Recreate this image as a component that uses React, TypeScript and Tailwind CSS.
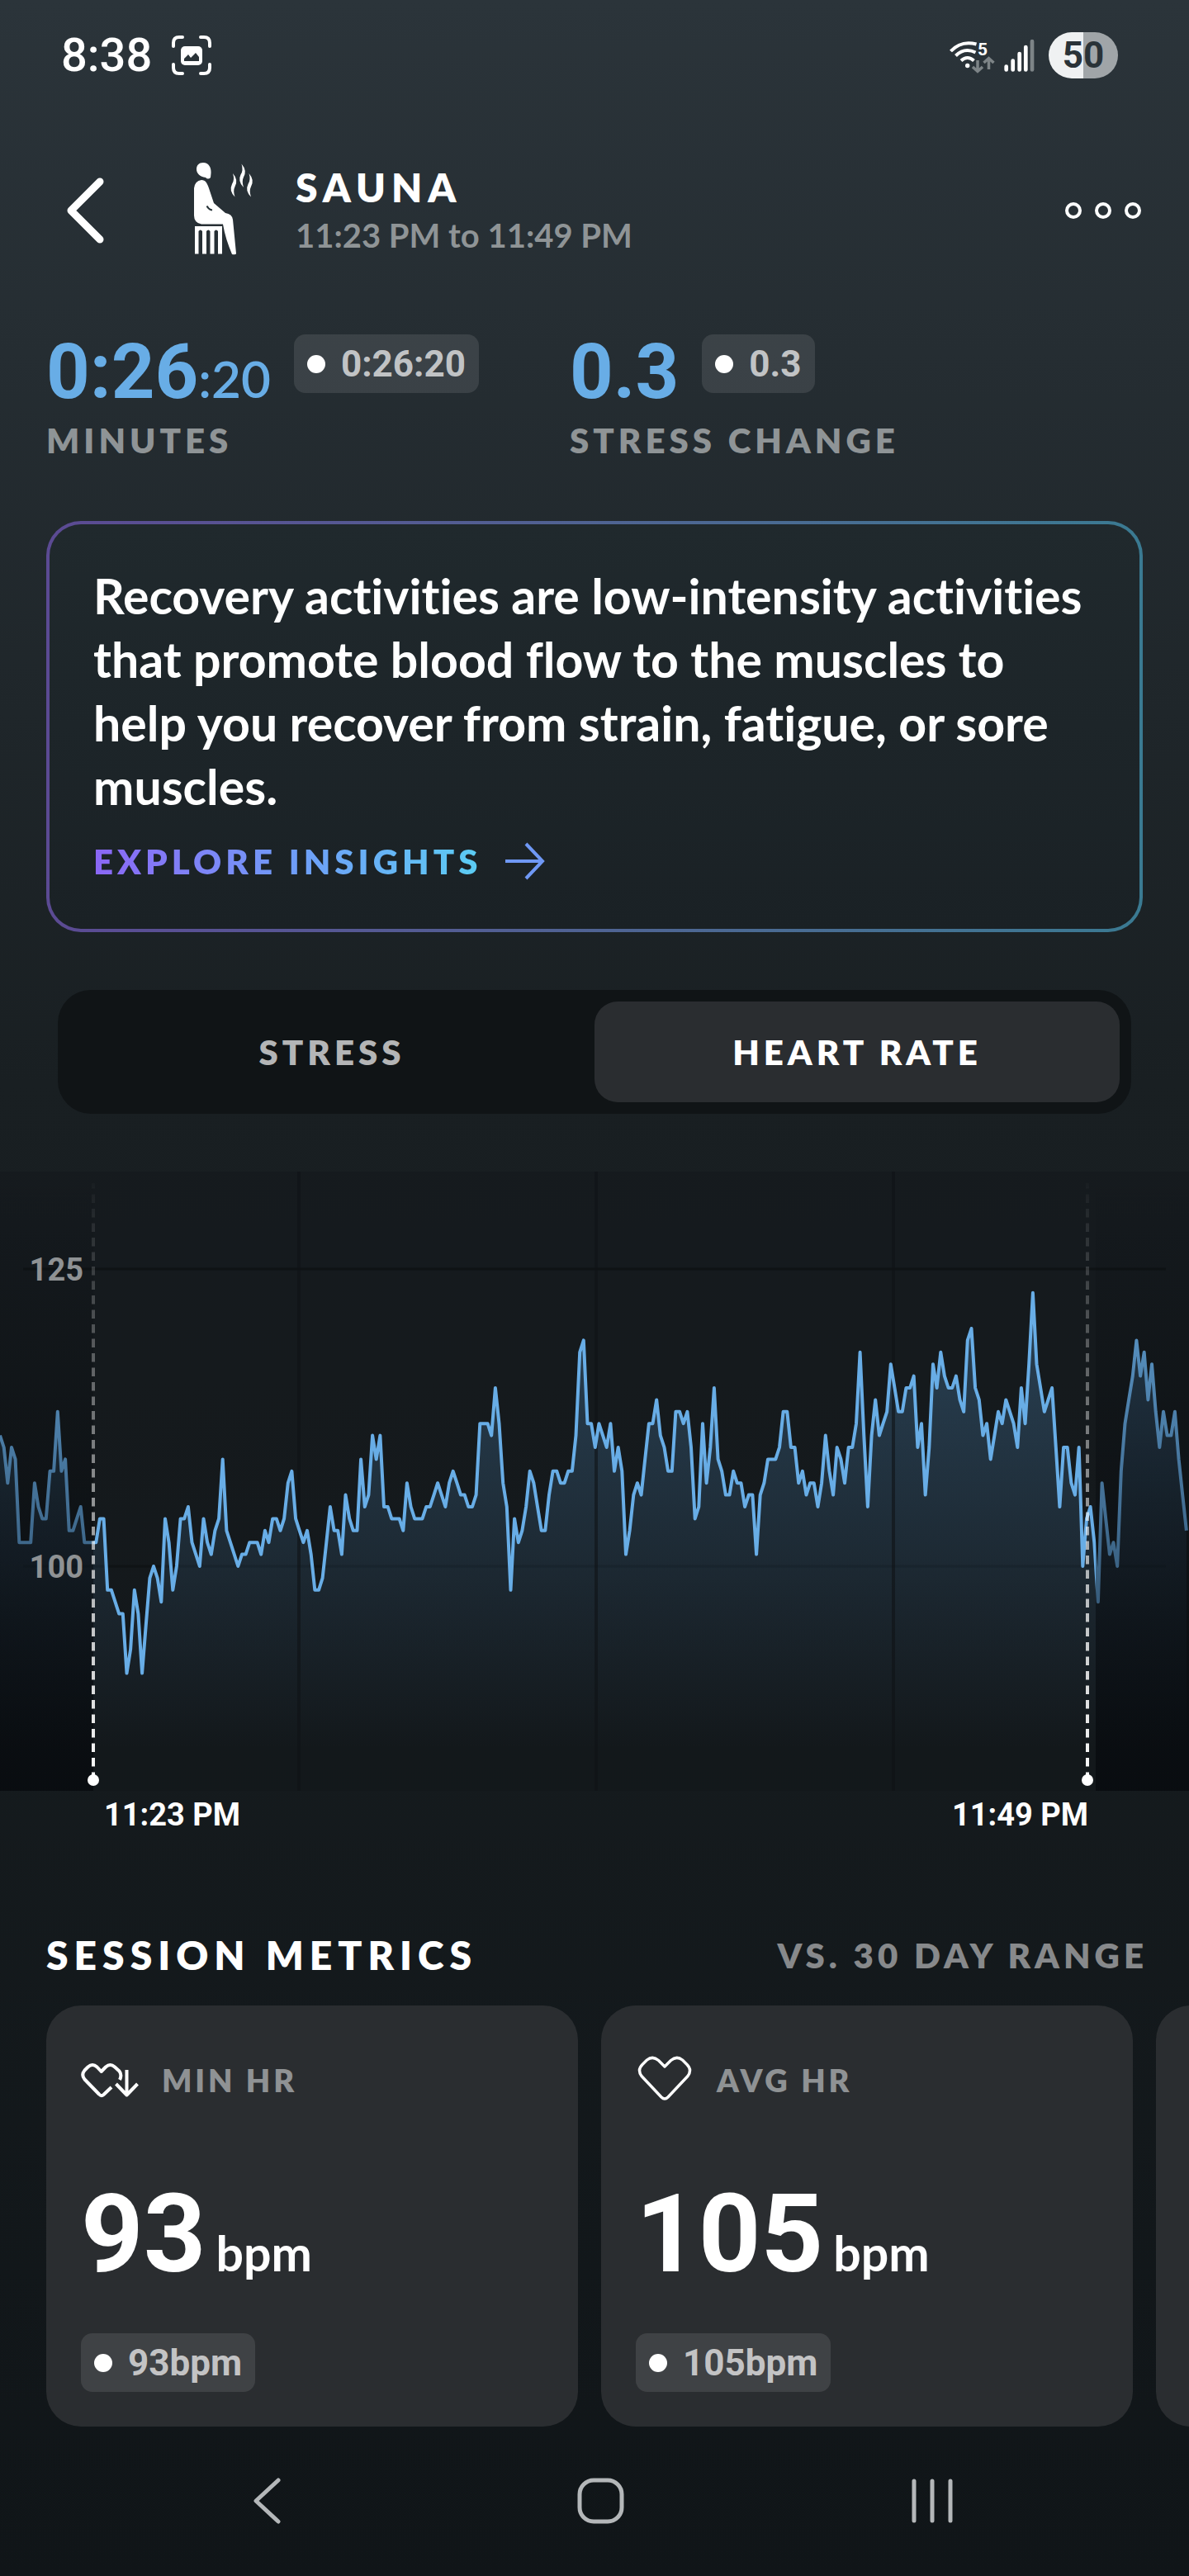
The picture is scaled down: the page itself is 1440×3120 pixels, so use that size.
import React from 'react';

const navItems = ['back', 'home', 'recents'];

// one heart rate sample every few seconds, in bpm
const samples = [
  111, 110, 107, 110, 109, 102, 102, 102, 102, 107, 105, 104, 104, 108, 108, 113, 108, 109, 103, 103,
  104, 105, 102, 102, 102, 102, 104, 104, 98, 98, 97, 96, 96, 91, 93, 98, 96, 91, 95, 99,
  100, 99, 97, 104, 102, 98, 100, 104, 104, 105, 102, 101, 100, 104, 102, 101, 103, 104, 109, 103,
  102, 101, 100, 101, 101, 102, 102, 102, 101, 103, 102, 104, 104, 103, 104, 107, 108, 104, 103, 102,
  103, 101, 98, 98, 99, 102, 105, 103, 103, 101, 106, 104, 103, 103, 109, 105, 106, 111, 109, 111,
  105, 105, 104, 104, 104, 103, 107, 105, 104, 104, 104, 105, 105, 106, 107, 106, 105, 107, 108, 107,
  106, 106, 105, 105, 106, 112, 112, 112, 111, 115, 112, 107, 105, 98, 104, 102, 103, 105, 108, 107,
  105, 103, 103, 106, 108, 108, 107, 107, 108, 108, 111, 118, 119, 112, 112, 110, 112, 111, 110, 112,
  108, 110, 108, 101, 103, 106, 107, 106, 109, 112, 112, 114, 111, 110, 108, 108, 113, 113, 112, 113,
  110, 104, 105, 112, 107, 110, 115, 109, 108, 106, 106, 108, 107, 107, 105, 106, 106, 101, 106, 107,
  109, 109, 109, 110, 113, 113, 110, 110, 107, 108, 106, 107, 107, 105, 107, 111, 108, 106, 110, 109,
  107, 110, 110, 112, 118, 111, 105, 111, 114, 111, 112, 113, 117, 115, 113, 113, 115, 115, 116, 110,
  112, 106, 110, 117, 115, 118, 116, 115, 115, 116, 114, 113, 119, 120, 115, 114, 111, 112, 109, 111,
  113, 112, 114, 113, 112, 110, 115, 112, 117, 123, 117, 115, 113, 114, 115, 110, 105, 110, 110, 107,
  106, 110, 100, 104, 105, 102, 97, 107, 104, 101, 102, 100, 108, 112, 114, 116, 119, 116, 118, 114,
  117, 113, 110, 113, 111, 111, 113, 109, 106, 103,
];

const linePoints = samples.map((bpm, i) => `${(i * 4.65).toFixed(1)},${(118 + (125 - bpm) * 14.4).toFixed(1)}`).join(' ');

const metrics = [
  { label: 'MIN HR', value: '93', icon: <MinHeartIcon /> },
  { label: 'AVG HR', value: '105', icon: <HeartIcon /> },
];

function HeartIcon() {
  return (
    <svg viewBox="0 0 70 60" className="h-[60px] w-[70px] shrink-0" fill="none" stroke="white" strokeWidth="3.4" strokeLinejoin="round" aria-hidden="true">
      <path d="M35 14 L27.500 6.500 Q20.500 0.500 13.500 6 L8 11.500 Q1.500 18 7 25.500 L31 51 Q35 55 39 51 L63 25.500 Q68.500 18 62 11.500 L56.500 6 Q49.500 0.500 42.500 6.500 Z" />
    </svg>
  );
}

function MinHeartIcon() {
  return (
    <svg viewBox="0 0 70 60" className="h-[60px] w-[70px] shrink-0" fill="none" stroke="white" strokeWidth="4" strokeLinejoin="round" aria-hidden="true">
      <path d="M47 30 Q50 24 46.500 19.500 L41 14.500 Q35.500 9.500 30 14.500 L24.700 20 L19.500 14.500 Q14 9.500 8.500 14.500 L4.500 18.500 Q0 24 4.500 29.500 L22 47.500 Q24.700 50.500 27.500 48 L37 39" />
      <path d="M55.500 18 V48 M42.500 35 L55.500 48.500 L68.500 35" />
    </svg>
  );
}

function SaunaIcon() {
  return (
    <svg viewBox="0 0 130 130" className="h-[130px] w-[130px] shrink-0" fill="white" aria-hidden="true">
      <path d="M26 7 C33 7 36 13 35.500 20 L35 25 Q32 28 29 25 C22 24 18 20 18 15 C18 10 21 7 26 7 Z" />
      <path d="M24 28 C29 28 31 32 33 38 L39 56 L53 68 Q61 69 62 76 L66 117 Q66 119 61 118 C56 106 52 94 50 81.500 L24 81.500 Q15 80 15 71 V38 Q16 29 24 28 Z" />
      <path d="M16 84 H49 V117.500 H44 V90 Q41.800 87 39.500 90 V117.500 H34.500 V90 Q32.300 87 30 90 V117.500 H25 V90 Q22.800 87 20.500 90 V117.500 H16 Z" />
      <path d="M30.500 59.500 Q33 64 37 64.500" fill="none" stroke="#263136" strokeWidth="2" />
      <g>
        <path d="M62 20 Q69 28 64.500 36 Q62 41 64.500 48.500 Q57 41 61 33 Q64.500 28 62 20 Z" />
        <path d="M72.500 8.500 Q79.500 16.500 75 24.500 Q72.500 29.500 75 37 Q67.500 29.500 71.500 21.500 Q75 16.500 72.500 8.500 Z" />
        <path d="M81.500 20 Q88.500 28 84 36 Q81.500 41 84 48.500 Q76.500 41 80.500 33 Q84 28 81.500 20 Z" />
      </g>
    </svg>
  );
}

function Chip({ children }: { children: React.ReactNode }) {
  return (
    <span className="flex h-[71px] w-fit items-center gap-[19px] rounded-[14px] bg-white/10 px-4 font-[Roboto,sans-serif] text-[44px] leading-none font-bold text-white/70">
      <span className="size-[22px] rounded-full bg-white" />
      {children}
    </span>
  );
}

function StatusBar() {
  return (
    <div className="flex h-[134px] items-center justify-between pr-[86px] pl-[74px] font-[Roboto,sans-serif] text-white">
      <div className="flex items-center gap-6">
        <span className="text-[56px] leading-none font-medium">8:38</span>
        <svg viewBox="0 0 48 48" className="size-12" fill="none" aria-hidden="true">
          <path d="M2 13 V9 Q2 2 9 2 H13 M35 2 H39 Q46 2 46 9 V13 M46 35 V39 Q46 46 39 46 H35 M13 46 H9 Q2 46 2 39 V35" stroke="white" strokeWidth="4" strokeLinecap="round" />
          <rect x="11" y="13" width="26" height="23" rx="5" fill="white" />
          <path d="M15 31 V28 L20 23 L23 27 L29 21 L33 26 V31 Z" fill="#2a3338" />
        </svg>
      </div>
      <div className="flex items-center gap-4">
        <svg viewBox="0 0 108 44" className="h-11 w-[108px]" fill="none" aria-hidden="true">
          <g stroke="white" strokeWidth="4">
            <path d="M5.500 17 Q18 3.500 36.500 8.500" />
            <path d="M11.500 22.500 Q22 12 35.500 18.500" />
            <path d="M18 28.500 Q25.700 21.500 33.500 28.500" />
          </g>
          <circle cx="25.700" cy="34.500" r="2.700" fill="white" />
          <text x="38" y="22" fill="white" fontSize="21" fontWeight="700" fontFamily="Roboto, sans-serif">5</text>
          <path d="M38 28 V41 M32 36 L38 41.500 L44 36 M51.500 39 V26 M45.500 31 L51.500 25.500 L57.500 31" stroke="#7d8487" strokeWidth="3.500" />
          <g stroke="white" strokeWidth="4.700" strokeLinecap="round">
            <path d="M72.700 35.500 V39.500 M80.700 28.500 V39.500 M88.700 20 V39.500 M96.300 12 V39.500" />
            <path d="M104 5 V39.500" stroke="#7d8487" />
          </g>
        </svg>
        <span className="flex h-14 w-[84px] items-center justify-center rounded-full bg-linear-to-r from-[#eff1f2] from-50% to-[#a0a5a8] to-50% text-[44px] leading-none font-bold text-[#2a3338]">
          50
        </span>
      </div>
    </div>
  );
}

function Header() {
  return (
    <header className="flex h-[242px] items-center pr-[58px] pl-20">
      <button type="button" aria-label="Back">
        <svg viewBox="0 0 46 80" className="h-20 w-[46px]" fill="none" stroke="white" strokeWidth="9" strokeLinecap="round" strokeLinejoin="round">
          <path d="M41 5 L6 40 L41 75" />
        </svg>
      </button>
      <div className="ml-[94px] flex flex-1 items-center gap-2">
        <SaunaIcon />
        <div>
          <h1 className="text-[48px] leading-[60px] font-extrabold tracking-[7px]">SAUNA</h1>
          <p className="text-[40px] leading-[56px] font-bold text-[#8f9496]">11:23 PM to 11:49 PM</p>
        </div>
      </div>
      <button type="button" aria-label="More options" className="flex gap-4">
        <span className="size-5 rounded-full border-4 border-white" />
        <span className="size-5 rounded-full border-4 border-white" />
        <span className="size-5 rounded-full border-4 border-white" />
      </button>
    </header>
  );
}

function HeartRateChart() {
  return (
    <div className="mt-[70px]">
      <svg viewBox="0 0 1440 750" className="block w-full" fill="none" role="img" aria-label="Heart rate from 11:23 PM to 11:49 PM">
        <defs>
          <linearGradient id="area" x1="0" y1="140" x2="0" y2="700" gradientUnits="userSpaceOnUse">
            <stop offset="0" stopColor="#5aa0dc" stopOpacity="0.300" />
            <stop offset="1" stopColor="#5aa0dc" stopOpacity="0" />
          </linearGradient>
          <linearGradient id="shade" x1="0" y1="0" x2="0" y2="750" gradientUnits="userSpaceOnUse">
            <stop offset="0" stopColor="#05080c" stopOpacity="0" />
            <stop offset="1" stopColor="#05080c" stopOpacity="0.700" />
          </linearGradient>
          <linearGradient id="dash" x1="0" y1="0" x2="0" y2="740" gradientUnits="userSpaceOnUse">
            <stop offset="0" stopColor="white" stopOpacity="0" />
            <stop offset="1" stopColor="white" />
          </linearGradient>
        </defs>
        <rect width="1440" height="750" fill="#101416" fillOpacity="0.300" />
        <path d="M28 118 H1412 M28 478 H1412" stroke="#0f1315" strokeWidth="3" />
        <polygon points={`0,750 ${linePoints} 1437,750`} fill="url(#area)" />
        <path d="M362 0 V750 M722 0 V750 M1082 0 V750" stroke="#0f1315" strokeOpacity="0.600" strokeWidth="4" />
        <polyline points={linePoints} stroke="#68ade6" strokeWidth="4" strokeLinejoin="round" />
        <rect width="113" height="750" fill="url(#shade)" />
        <rect x="1327" width="113" height="750" fill="url(#shade)" />
        <mask id="dashes" maskUnits="userSpaceOnUse" x="0" y="0" width="1440" height="750">
          <path d="M113 738 V0 M1317 738 V0" stroke="white" strokeWidth="4" strokeDasharray="10.500 7" />
        </mask>
        <rect x="111" y="14" width="4" height="722" fill="url(#dash)" mask="url(#dashes)" />
        <rect x="1315" y="14" width="4" height="722" fill="url(#dash)" mask="url(#dashes)" />
        <circle cx="113" cy="737" r="7" fill="white" />
        <circle cx="1317" cy="737" r="7" fill="white" />
        <g fill="#8f9294" fontFamily="Roboto, sans-serif" fontSize="38" fontWeight="700" textAnchor="end">
          <text x="101" y="132">125</text>
          <text x="101" y="492">100</text>
        </g>
      </svg>
      <div className="flex justify-between pr-[122px] pl-[126px] font-[Roboto,sans-serif] text-[38px] leading-[58px] font-bold">
        <span>11:23 PM</span>
        <span>11:49 PM</span>
      </div>
    </div>
  );
}

function NavBar() {
  return (
    <nav className="flex justify-between pt-10 pr-[261px] pb-9 pl-[274px]">
      {navItems.map((item) => (
        <button key={item} type="button" aria-label={item}>
          <svg viewBox="0 0 100 100" className="size-[100px]" fill="none" stroke="#b4b7b9" strokeWidth="5" strokeLinecap="round" strokeLinejoin="round">
            {item === 'back' && <path d="M63 25 L36 50 L63 75" />}
            {item === 'home' && <rect x="25" y="25" width="51" height="50" rx="17" />}
            {item === 'recents' && <path d="M28 26 V74 M50 26 V74 M72 26 V74" />}
          </svg>
        </button>
      ))}
    </nav>
  );
}

export default function App() {
  return (
    <div className="min-h-screen overflow-hidden bg-linear-to-b from-[#2b343a] via-[#191f22] via-42% to-[#101518] font-[Lato,sans-serif] text-white">
      <StatusBar />
      <Header />

      {/* Summary */}
      <section className="flex px-14 pt-[29px]">
        <div className="w-[634px]">
          <div className="flex h-[92px] items-start gap-7">
            <p className="font-[Roboto,sans-serif] text-[92px] leading-[92px] font-bold text-[#68ade6]">
              0:26<span className="font-[Lato,sans-serif] text-[62px] font-semibold">:20</span>
            </p>
            <Chip>0:26:20</Chip>
          </div>
          <p className="mt-2 text-[42px] leading-[56px] font-extrabold tracking-[5px] text-[#8f9496]">MINUTES</p>
        </div>
        <div>
          <div className="flex h-[92px] items-start gap-7">
            <p className="font-[Roboto,sans-serif] text-[92px] leading-[92px] font-bold text-[#68ade6]">0.3</p>
            <Chip>0.3</Chip>
          </div>
          <p className="mt-2 text-[42px] leading-[56px] font-extrabold tracking-[5px] text-[#8f9496]">STRESS CHANGE</p>
        </div>
      </section>

      {/* Insights */}
      <section className="mx-14 mt-[70px] rounded-[42px] bg-linear-to-r from-[#5b4a93] to-[#3a7a92] p-1">
        <div className="rounded-[38px] bg-linear-to-b from-[#20292d] to-[#1a2125] px-[53px] pt-12 pb-[46px]">
          <p className="text-[59px] leading-[77px] font-bold [font-variant-ligatures:none]">
            Recovery activities are low-intensity activities that promote blood flow to the muscles to help you recover
            from strain, fatigue, or sore muscles.
          </p>
          <a href="#insights" className="mt-4 flex w-fit items-center gap-7 text-[42px] leading-[72px] font-extrabold">
            <span className="bg-linear-to-r from-[#8a66f5] via-[#6f9bf8] to-[#5acdf3] bg-clip-text tracking-[5px] text-transparent">
              EXPLORE INSIGHTS
            </span>
            <svg viewBox="0 0 48 46" className="h-[46px] w-12" fill="none" stroke="#6f98f5" strokeWidth="4" aria-hidden="true">
              <path d="M0 23 H44 M25 2 L45 23 L25 44" />
            </svg>
          </a>
        </div>
      </section>

      {/* Chart tabs */}
      <div role="tablist" className="mx-[70px] mt-[70px] grid grid-cols-2 rounded-[40px] bg-[#101416] p-[14px] text-[42px] leading-[122px] font-extrabold tracking-[5px]">
        <button type="button" role="tab" aria-selected="false" className="rounded-[28px] text-white/70">
          STRESS
        </button>
        <button type="button" role="tab" aria-selected="true" className="rounded-[28px] bg-[#2a2d30]">
          HEART RATE
        </button>
      </div>

      <HeartRateChart />

      {/* Session metrics */}
      <section>
        <div className="mt-[106px] flex items-center justify-between pr-[50px] pl-14">
          <h2 className="text-[48px] leading-[70px] font-extrabold tracking-[7px]">SESSION METRICS</h2>
          <p className="text-[42px] leading-[70px] font-extrabold tracking-[5px] text-[#87898b]">VS. 30 DAY RANGE</p>
        </div>
        <div className="mt-[26px] flex gap-7 overflow-hidden pl-14">
          {metrics.map((metric) => (
            <article key={metric.label} className="w-[644px] shrink-0 rounded-[42px] bg-[#2a2d30] px-[42px] pt-[60px] pb-[42px]">
              <div className="flex items-center gap-7">
                {metric.icon}
                <h3 className="text-[38px] leading-[60px] font-extrabold tracking-widest text-[#8f9294]">{metric.label}</h3>
              </div>
              <p className="mt-[74px] flex items-baseline gap-3 leading-[166px]">
                <span className="font-[Roboto,sans-serif] text-[132px] font-bold">{metric.value}</span>
                <span className="text-[59px] font-bold">bpm</span>
              </p>
              <div className="mt-[14px]">
                <Chip>{metric.value}bpm</Chip>
              </div>
            </article>
          ))}
          {/* next card peeks in from the right */}
          <div className="w-[644px] shrink-0 rounded-[42px] bg-[#2a2d30]" />
        </div>
      </section>

      <NavBar />
    </div>
  );
}
